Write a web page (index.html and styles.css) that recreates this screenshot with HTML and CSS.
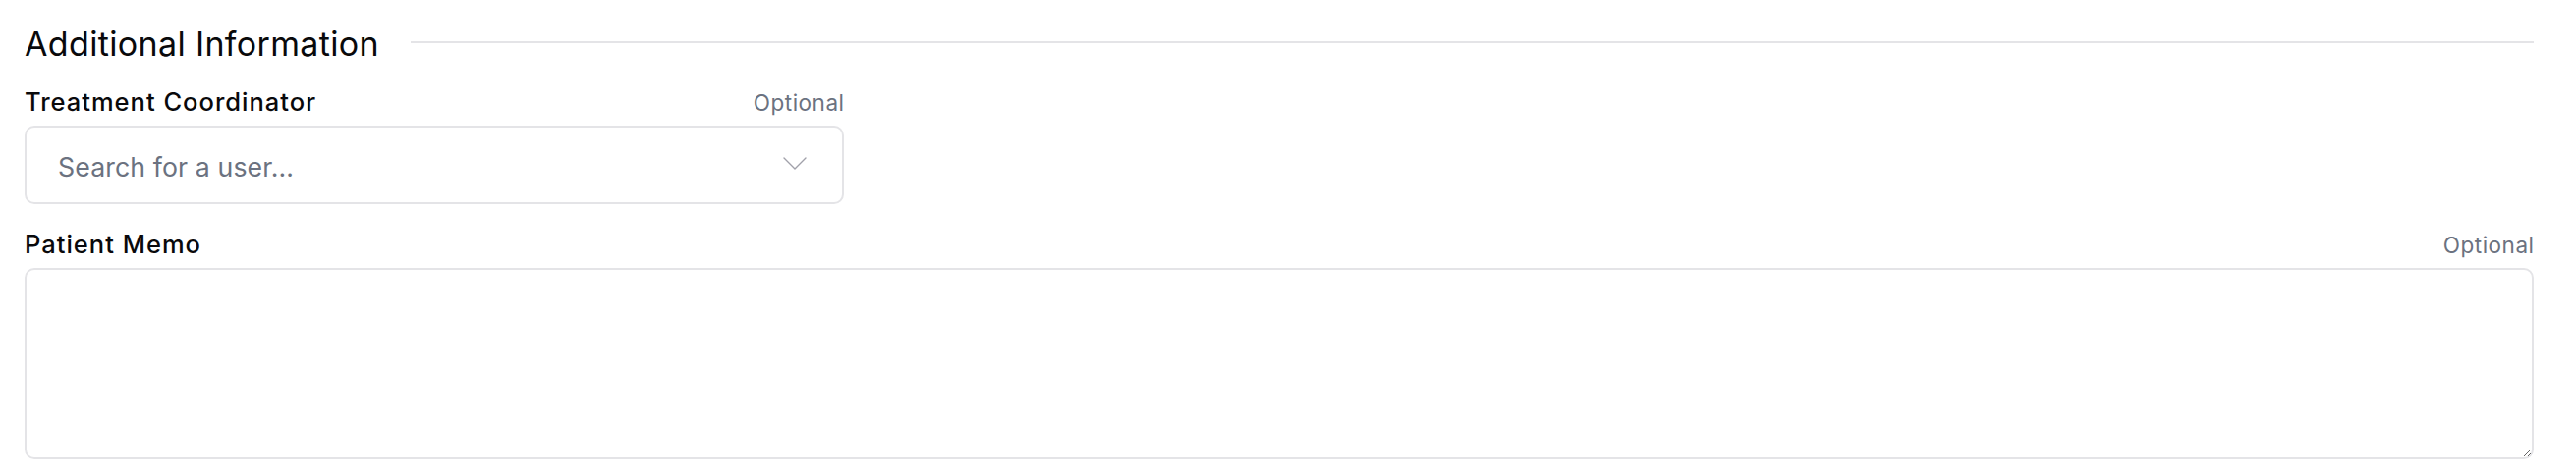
FILE: index.html
```html
<!DOCTYPE html>
<html lang="en">
<head>
<meta charset="utf-8">
<title>Additional Information</title>
<link rel="stylesheet" href="styles.css">
</head>
<body>
<section class="section">
  <div class="section-header">
    <h2 class="section-title">Additional Information</h2>
    <div class="section-rule"></div>
  </div>
  <div class="fields">
    <div class="field">
      <div class="field-label-row">
        <label class="field-label">Treatment Coordinator</label>
        <span class="field-optional">Optional</span>
      </div>
      <div class="select">
        <span class="select-placeholder">Search for a user...</span>
        <svg class="select-chevron" width="24" height="13" viewBox="0 0 24 13" aria-hidden="true">
          <polyline points="1,1 12,12 23,1" fill="none" stroke="#a1a1aa" stroke-width="1.4" stroke-linecap="round" stroke-linejoin="round"/>
        </svg>
      </div>
    </div>
    <div class="field field-full">
      <div class="field-label-row">
        <label class="field-label">Patient Memo</label>
        <span class="field-optional">Optional</span>
      </div>
      <textarea class="textarea"></textarea>
    </div>
  </div>
</section>
</body>
</html>
```

FILE: styles.css
```css
* { box-sizing: border-box; }

html, body {
  margin: 0;
  background: #ffffff;
}

body {
  font-family: Inter, "Noto Sans", "Liberation Sans", sans-serif;
  color: #09090b;
}

.section {
  padding: 21px 43px 0 25px;
}

.section-header {
  display: flex;
  align-items: center;
  gap: 32px;
  height: 47px;
}

.section-title {
  margin: 0;
  font-size: 34px;
  line-height: 47px;
  font-weight: 400;
  letter-spacing: 0.35px;
  white-space: nowrap;
}

.section-rule {
  flex: 1;
  height: 2px;
  background: #e4e4e7;
  margin-top: -3px;
}

.fields {
  display: grid;
  grid-template-columns: repeat(3, 1fr);
  column-gap: 26px;
  row-gap: 24px;
  margin-top: 19px;
}

.field-full {
  grid-column: 1 / -1;
}

.field-label-row {
  display: flex;
  justify-content: space-between;
  align-items: baseline;
  height: 33px;
  margin-bottom: 8px;
}

.field-label {
  font-size: 25.5px;
  line-height: 33px;
  font-weight: 500;
  letter-spacing: 1px;
  color: #09090b;
}

.field-optional {
  font-size: 22.5px;
  line-height: 33px;
  letter-spacing: 0.5px;
  margin-right: -0.5px;
  color: #6b7280;
}

.select {
  display: flex;
  align-items: center;
  justify-content: space-between;
  height: 80px;
  padding: 4px 36px 0 32px;
  border: 2px solid #e4e4e7;
  border-radius: 10px;
  background: #ffffff;
}

.select-placeholder {
  font-size: 26.7px;
  line-height: 36px;
  letter-spacing: 0.1px;
  color: #6b7280;
}

.select-chevron {
  display: block;
  margin-top: -8px;
}

.textarea {
  display: block;
  width: 100%;
  height: 195px;
  border: 2px solid #e4e4e7;
  border-radius: 10px;
  background: #ffffff;
  resize: vertical;
  font-family: inherit;
  font-size: 26.7px;
  padding: 16px 32px;
  margin: 0;
  outline: none;
}
```
